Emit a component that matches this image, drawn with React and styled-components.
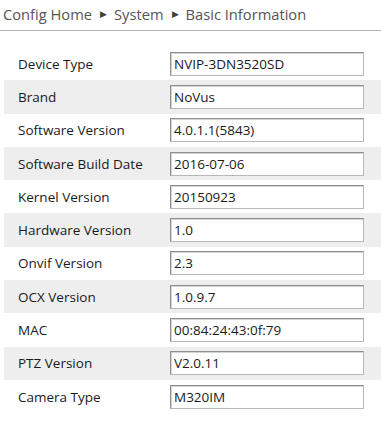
import styled, { createGlobalStyle } from 'styled-components';

const GlobalStyle = createGlobalStyle`
    body {
        margin: 0;
        background: #fff;
        font-family: "Open Sans", "Noto Sans", sans-serif;
    }
`;

const Page = styled.div`
    width: 381px;
    height: 421px;
    overflow: hidden;
`;

const Crumbs = styled.div`
    display: flex;
    align-items: center;
    height: 27px;
    padding: 0 0 3px 3px;
    border-bottom: 1px solid #b4b4b4;
    color: #555;
    font-size: 14.7px;
    white-space: nowrap;
`;

const Arrow = styled.span`
    font-size: 9px;
    color: #444;
    margin: 0 7px 0 8px;
`;

const Table = styled.div`
    display: flex;
    flex-direction: column;
    margin: 16px 0 0 4px;
`;

const Row = styled.div`
    display: flex;
    align-items: center;
    height: 33.3px;
    padding-left: 14px;
    background: ${({ shaded }) => shaded ? '#eeeeee' : 'transparent'};
`;

const Label = styled.div`
    width: 152px;
    font-size: 13.5px;
    color: #1a1a1a;
    white-space: nowrap;
`;

const Field = styled.input`
    box-sizing: border-box;
    width: 194px;
    height: 24px;
    padding: 0 0 0 3px;
    border: 1px solid #8f8f8f;
    border-right-color: #b8b8b8;
    border-bottom-color: #b8b8b8;
    box-shadow: inset 1px 1px 0 #d4d4d4;
    background: #fff;
    font-family: inherit;
    font-size: 13.5px;
    color: #1a1a1a;
    outline: none;
`;

const rows = [
    ['Device Type', 'NVIP-3DN3520SD'],
    ['Brand', 'NoVus'],
    ['Software Version', '4.0.1.1(5843)'],
    ['Software Build Date', '2016-07-06'],
    ['Kernel Version', '20150923'],
    ['Hardware Version', '1.0'],
    ['Onvif Version', '2.3'],
    ['OCX Version', '1.0.9.7'],
    ['MAC', '00:84:24:43:0f:79'],
    ['PTZ Version', 'V2.0.11'],
    ['Camera Type', 'M320IM'],
];

export default function App() {
    return (
        <Page>
            <GlobalStyle />
            <Crumbs>
                Config Home<Arrow>▶</Arrow>System<Arrow>▶</Arrow>Basic Information
            </Crumbs>
            <Table>
                {rows.map(([label, value], i) => (
                    <Row key={label} shaded={i % 2 === 1}>
                        <Label>{label}</Label>
                        <Field value={value} readOnly />
                    </Row>
                ))}
            </Table>
        </Page>
    );
}
